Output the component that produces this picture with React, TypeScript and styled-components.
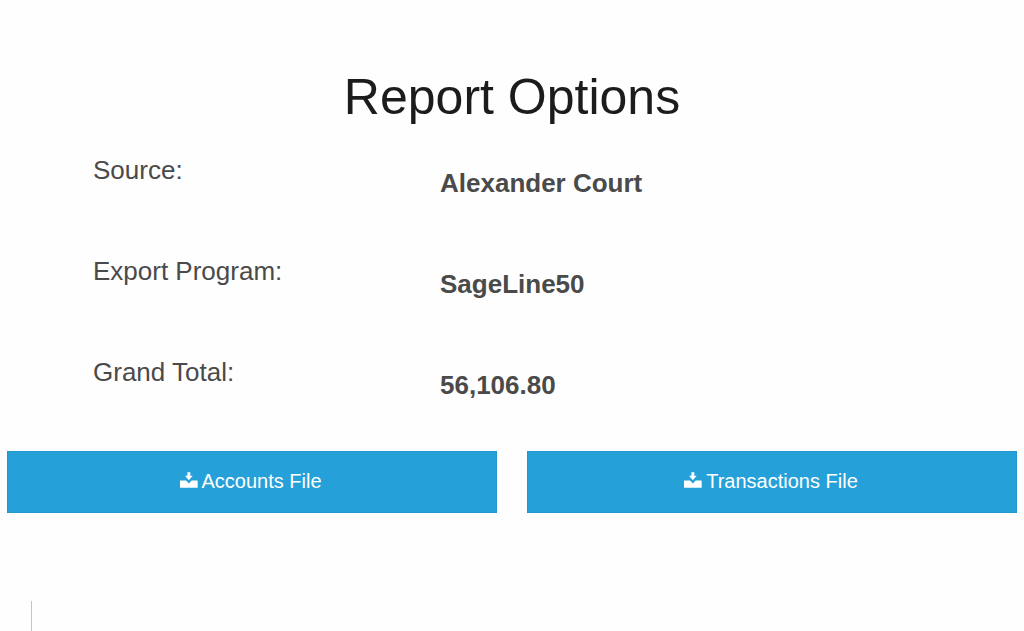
import React from "react";
import styled, { createGlobalStyle } from "styled-components";

const GlobalStyle = createGlobalStyle`
  * { box-sizing: border-box; }
  body {
    margin: 0;
    background: #fefefe;
    color: #4a4a4a;
    font-family: "Liberation Sans", Arial, sans-serif;
  }
`;

const Page = styled.main`
  padding: 67px 7px 0;
`;

const Title = styled.h1`
  margin: 0;
  color: #1c1c1c;
  font-size: 50px;
  line-height: 60px;
  font-weight: 400;
  text-align: center;
`;

const Details = styled.dl`
  margin: 28px 0 0;
  padding: 0 86px;
  font-size: 26px;
  line-height: 30px;
`;

const DetailRow = styled.div`
  display: grid;
  grid-template-columns: 347fr 491fr;
  min-height: 101px;
`;

const Label = styled.dt`
  margin: 0;
`;

const Value = styled.dd`
  margin: 0;
  padding-top: 13px;
  font-weight: 700;
`;

const Actions = styled.div`
  display: grid;
  grid-template-columns: 1fr 1fr;
  gap: 30px;
  margin-top: -7px;
`;

const DownloadButton = styled.button<{ $gap: number }>`
  display: flex;
  align-items: center;
  justify-content: center;
  gap: ${({ $gap }) => $gap}px;
  padding: 18px 17px 19px 15px;
  border: 1px solid #2199cf;
  border-radius: 0;
  background: #26a0d8;
  color: #fff;
  font-family: inherit;
  font-size: 20px;
  line-height: 23px;
  cursor: pointer;
`;

const Divider = styled.div`
  width: 1px;
  height: 30px;
  margin: 88px 0 0 24px;
  background: #c4c4c4;
`;

const DownloadIcon = () => (
  <svg width="18" height="19" viewBox="0 0 18 19" fill="currentColor" aria-hidden="true">
    <path d="M7.4 0.3h2.9v3.5h2.4L8.85 8.3 5 3.8h2.4z" />
    <path d="M0.4 8.6H6L8.85 11.6 11.7 8.6h5.6q.4 0 .4.4v6.4q0 .4-.4.4H.4q-.4 0-.4-.4V9q0-.4.4-.4z" />
  </svg>
);

const details = [
  { label: "Source:", value: "Alexander Court" },
  { label: "Export Program:", value: "SageLine50" },
  { label: "Grand Total:", value: "56,106.80" },
];

export default function App() {
  return (
    <>
      <GlobalStyle />
      <Page>
        <Title>Report Options</Title>
        <Details>
          {details.map(({ label, value }) => (
            <DetailRow key={label}>
              <Label>{label}</Label>
              <Value>{value}</Value>
            </DetailRow>
          ))}
        </Details>
        <Actions>
          <DownloadButton type="button" $gap={3}>
            <DownloadIcon />
            Accounts File
          </DownloadButton>
          <DownloadButton type="button" $gap={4}>
            <DownloadIcon />
            Transactions File
          </DownloadButton>
        </Actions>
        <Divider />
      </Page>
    </>
  );
}
